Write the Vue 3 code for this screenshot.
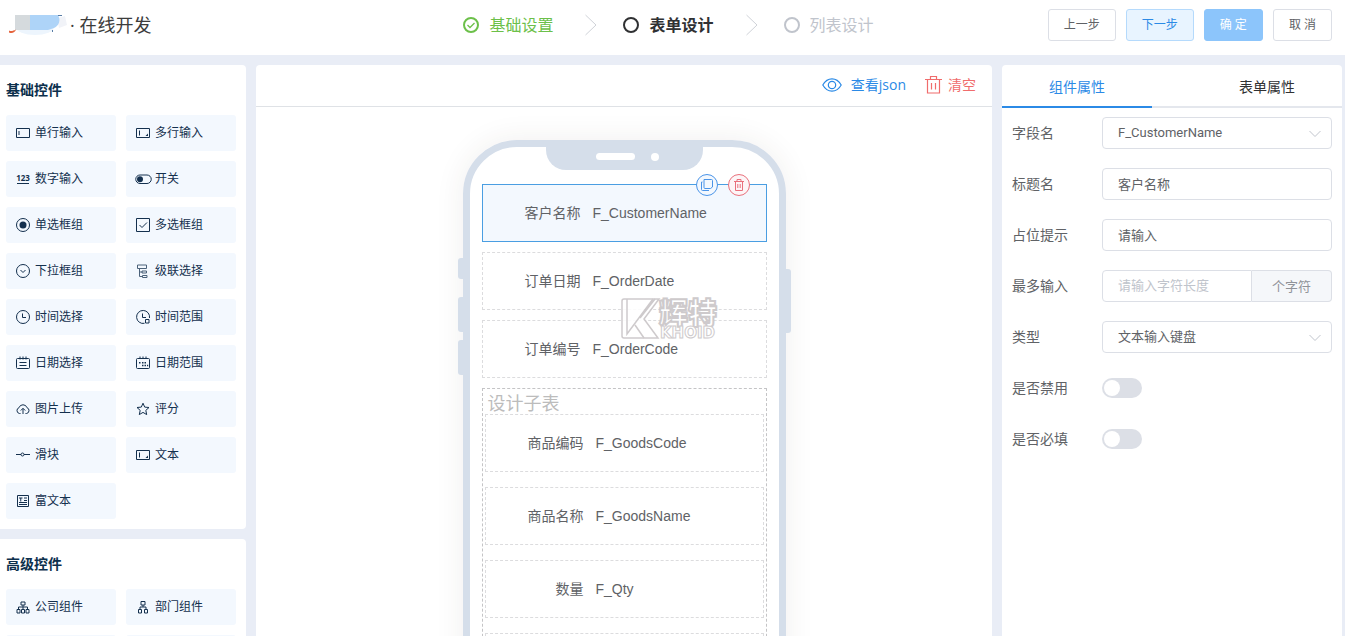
<script setup>
import { ref } from 'vue'

const steps = [
  { label: '基础设置', state: 'done' },
  { label: '表单设计', state: 'current' },
  { label: '列表设计', state: 'todo' },
]

const icons = {
  input: { line: ['M.5 2.500h13v9H.5z', 'M3 5v4'] },
  textarea: { line: ['M.5 2.500h13v9H.5z', 'M3.500 4.500v5'], fill: ['M12 7.500V10H9.500z'] },
  number: { line: ['M1 11.500h12'], text: '123' },
  toggle: { line: ['M4 3h7a4 4 0 0 1 0 8.500H4A4 4 0 0 1 4 3z'], fill: ['M4 4.200a3 3 0 1 1 0 6a3 3 0 0 1 0-6z'] },
  radio: { line: ['M7 .5a6.500 6.500 0 1 1 0 13a6.500 6.500 0 0 1 0-13z'], fill: ['M7 3.500a3.500 3.500 0 1 1 0 7a3.500 3.500 0 0 1 0-7z'] },
  check: { line: ['M.5.5h13v13H.5z', 'M3.500 7l2.500 2.500L11 4.500'] },
  select: { line: ['M7 .5a6.500 6.500 0 1 1 0 13a6.500 6.500 0 0 1 0-13z', 'M4.500 6L7 8.500l2.500-2.500'] },
  cascade: { line: ['M1.500 1h9v3.500h-9z', 'M3.500 4.500v8h3', 'M3.500 8h3', 'M6 7h4.500v2H6z', 'M6.500 11.500h4.500v2H6.500z'], soft: true },
  clock: { line: ['M7 .5a6.500 6.500 0 1 1 0 13a6.500 6.500 0 0 1 0-13z', 'M6.500 3.500v4H10'] },
  clockRange: { line: ['M13.500 8A6.500 6.500 0 1 0 8.500 13.300', 'M6.500 3.500v4H10', 'M9.500 9.500h3.500v3.500H9.500z'] },
  calendar: { line: ['M1.500 2.500h11a1 1 0 0 1 1 1v8a1 1 0 0 1-1 1h-11a1 1 0 0 1-1-1v-8a1 1 0 0 1 1-1z', 'M4 .5v3M7 .5v3M10 .5v3', 'M3.500 6.500h7M3.500 9.500h7'] },
  calendarRange: { line: ['M1.500 2.500h11a1 1 0 0 1 1 1v8a1 1 0 0 1-1 1h-11a1 1 0 0 1-1-1v-8a1 1 0 0 1 1-1z', 'M4 .5v2M7 .5v2M10 .5v2'], fill: ['M3 6h1.500v1.500H3zM6 6h1.500v1.500H6zM8.500 6H10v1.500H8.500zM6 8.800h1.500v1.500H6zM8.500 8.800H10v1.500H8.500zM11 8.800h1.200v1.500H11z'] },
  upload: { line: ['M4.500 11.500H3.500a3 3 0 0 1-.5-5.800a4.200 4.200 0 0 1 8 0a3 3 0 0 1-.5 5.800h-1', 'M7 12V6.500', 'M4.800 8.500L7 6.300l2.200 2.200'] },
  star: { line: ['M7 1.200l1.700 3.900l4.300.4l-3.200 2.900l.9 4.200L7 10.400l-3.700 2.200l.9-4.200L1 5.500l4.300-.4z'] },
  slider: { line: ['M0 6.500h5M8 6.500h6', 'M6.500 5a1.500 1.500 0 1 1 0 3a1.500 1.500 0 0 1 0-3z'] },
  richtext: { line: ['M1.500 1.500h11v11h-11z', 'M3 4h3.500M4.750 4v3.500M8 4h3M8 6.500h3M3 8.500h8M3 10.500h8'] },
  company: { line: ['M5 2h4v3H5z', 'M7 5v2M2.500 9.500V7h9v2.500M7 7v2.500', 'M1 9.500h3V13H1zM5.500 9.500h3V13h-3zM10 9.500h3V13h-3z'] },
  department: { line: ['M5 1.500h4v3.500H5z', 'M7 5v2M4 9.500V7h6v2.500', 'M2.500 9.500h3V13h-3zM8.500 9.500h3V13h-3z'] },
}

const groups = [
  {
    title: '基础控件',
    items: [
      ['input', '单行输入'], ['textarea', '多行输入'],
      ['number', '数字输入'], ['toggle', '开关'],
      ['radio', '单选框组'], ['check', '多选框组'],
      ['select', '下拉框组'], ['cascade', '级联选择'],
      ['clock', '时间选择'], ['clockRange', '时间范围'],
      ['calendar', '日期选择'], ['calendarRange', '日期范围'],
      ['upload', '图片上传'], ['star', '评分'],
      ['slider', '滑块'], ['textarea', '文本'],
      ['richtext', '富文本'],
    ],
    blanks: 0,
  },
  {
    title: '高级控件',
    items: [['company', '公司组件'], ['department', '部门组件']],
    blanks: 2,
  },
]

const fields = [
  { label: '客户名称', name: 'F_CustomerName' },
  { label: '订单日期', name: 'F_OrderDate' },
  { label: '订单编号', name: 'F_OrderCode' },
]
const tableFields = [
  { label: '商品编码', name: 'F_GoodsCode' },
  { label: '商品名称', name: 'F_GoodsName' },
  { label: '数量', name: 'F_Qty' },
  { label: '', name: '' },
]

const selected = ref(0)
const tab = ref(0)
const title = ref('客户名称')
const placeholder = ref('请输入')
const maxLength = ref('')
const disabled = ref(false)
const required = ref(false)
</script>

<template>
  <div class="page">
    <header class="header">
      <div class="brand">
        <svg class="logo" width="62" height="26" viewBox="0 0 62 26" aria-hidden="true">
          <ellipse cx="30" cy="15" rx="19" ry="8" fill="#edf5fd" />
          <path d="M52 6l8-2l2 9l-8 3z" fill="#f1f3f8" />
          <path d="M10 3h15v15H10z" fill="#d5dadd" />
          <path d="M25 3h28c3 5 1 11-4 13l-6 2H25z" fill="#aed4f8" />
          <path d="M4 18.500c2 1 4 .5 7-1c-1 3-4 4.500-7 3z" fill="#e5633c" />
          <path d="M53 3.500h4M47.500 18v2" stroke="#587da6" stroke-width="1" />
        </svg>
        <span>· 在线开发</span>
      </div>
      <ol class="steps">
        <li v-for="(s, i) in steps" :key="s.label" class="step" :class="s.state">
          <svg width="16" height="16" viewBox="0 0 16 16" fill="none" stroke="currentColor" aria-hidden="true">
            <circle cx="8" cy="8" r="7" stroke-width="2" />
            <path v-if="s.state === 'done'" d="M4.500 8l2.500 2.500l4.500-4.500" stroke-width="1.300" />
          </svg>
          <span>{{ s.label }}</span>
          <svg v-if="i < 2" class="arrow" width="12" height="22" viewBox="0 0 12 22" fill="none" stroke="#cfd2d8" aria-hidden="true">
            <path d="M.5 1L11 11L.5 21" />
          </svg>
        </li>
      </ol>
      <div class="actions">
        <button type="button" class="btn">上一步</button>
        <button type="button" class="btn next">下一步</button>
        <button type="button" class="btn ok">确 定</button>
        <button type="button" class="btn">取 消</button>
      </div>
    </header>

    <main class="body">
      <aside class="left">
        <section v-for="g in groups" :key="g.title" class="group">
          <h2>{{ g.title }}</h2>
          <div class="tiles">
            <button v-for="it in g.items" :key="it[1]" type="button" class="tile">
              <svg width="14" height="14" viewBox="0 0 14 14" :class="{ soft: icons[it[0]].soft }" aria-hidden="true">
                <path v-for="d in icons[it[0]].line" :key="d" :d="d" fill="none" stroke="currentColor" />
                <path v-for="d in icons[it[0]].fill" :key="d" :d="d" fill="currentColor" />
                <text v-if="icons[it[0]].text" x="7" y="9" text-anchor="middle" class="digits">{{ icons[it[0]].text }}</text>
              </svg>
              <span>{{ it[1] }}</span>
            </button>
            <div v-for="n in g.blanks" :key="n" class="tile"></div>
          </div>
        </section>
      </aside>

      <section class="center">
        <div class="toolbar">
          <button type="button" class="tool view">
            <svg width="20" height="16" viewBox="0 0 20 16" fill="none" stroke="currentColor" stroke-width="1.200" aria-hidden="true">
              <path d="M.8 8C5.500-.2 14.500-.2 19.200 8C14.500 16.200 5.500 16.200.8 8z" />
              <circle cx="10" cy="8" r="3.700" />
            </svg>
            <span>查看json</span>
          </button>
          <button type="button" class="tool clear">
            <svg width="17" height="18" viewBox="0 0 17 18" fill="none" stroke="currentColor" stroke-width="1.200" aria-hidden="true">
              <path d="M0 3.500h17M5.500 3.500v-3h6v3M2.500 3.500v13.500h12V3.500M6.500 7v6.500M10.500 7v6.500" />
            </svg>
            <span>清空</span>
          </button>
        </div>
        <div class="stage">
          <div class="phone">
            <i class="key k1"></i><i class="key k2"></i><i class="key k3"></i><i class="key k4"></i>
            <div class="notch"><i class="speaker"></i><i class="camera"></i></div>
            <div class="form">
              <div v-for="(f, i) in fields" :key="f.name" class="field" :class="{ selected: selected === i }" @click="selected = i">
                <span class="label">{{ f.label }}</span>
                <span>{{ f.name }}</span>
                <div v-if="selected === i" class="tools">
                  <button type="button" class="round copy" aria-label="复制">
                    <svg width="12" height="12" viewBox="0 0 12 12" fill="none" stroke="currentColor">
                      <path d="M3 .5h7.500a1 1 0 0 1 1 1V8L9.500 9.500H4a1 1 0 0 1-1-1z" />
                      <path d="M1.500 3H.5v7.500a1 1 0 0 0 1 1H8" />
                    </svg>
                  </button>
                  <button type="button" class="round remove" aria-label="删除">
                    <svg width="12" height="12" viewBox="0 0 12 12" fill="none" stroke="currentColor">
                      <path d="M1 2.500h10M4 2.500v-2h4v2M2.500 2.500v9h7v-9M4.800 5v4M7.200 5v4" />
                    </svg>
                  </button>
                </div>
              </div>
              <div class="subtable">
                <div class="subtitle">设计子表</div>
                <div class="rows">
                  <div v-for="f in tableFields" :key="f.name" class="field">
                    <span class="label">{{ f.label }}</span>
                    <span>{{ f.name }}</span>
                  </div>
                </div>
              </div>
            </div>
            <svg class="mark" width="98" height="43" viewBox="0 0 98 43">
              <g fill="#fff" stroke="#c9c5c7" stroke-width="1.500">
                <path d="M3 1h35L23 21l14 19H3a2 2 0 0 1-2-2V3a2 2 0 0 1 2-2z" />
                <path d="M6 1v35L32 1M14 27l9 13M19 20L34 1" fill="none" />
              </g>
              <text x="38" y="26" class="mark-cn">辉特</text>
              <text x="39" y="40" class="mark-en">KHOID</text>
            </svg>
          </div>
        </div>
      </section>

      <aside class="right">
        <div class="tabs" role="tablist">
          <button type="button" role="tab" :aria-selected="tab === 0" :class="{ active: tab === 0 }" @click="tab = 0">组件属性</button>
          <button type="button" role="tab" :aria-selected="tab === 1" :class="{ active: tab === 1 }" @click="tab = 1">表单属性</button>
        </div>
        <form class="props" @submit.prevent>
          <div class="row">
            <label for="p-field">字段名</label>
            <div class="control">
              <select id="p-field"><option>F_CustomerName</option></select>
              <svg class="caret" width="12" height="8" viewBox="0 0 12 8" fill="none" stroke="#c0c4cc" aria-hidden="true"><path d="M.5 1L6 6.500L11.500 1" /></svg>
            </div>
          </div>
          <div class="row">
            <label for="p-title">标题名</label>
            <div class="control"><input id="p-title" v-model="title" type="text" /></div>
          </div>
          <div class="row">
            <label for="p-hint">占位提示</label>
            <div class="control"><input id="p-hint" v-model="placeholder" type="text" /></div>
          </div>
          <div class="row">
            <label for="p-max">最多输入</label>
            <div class="control joined">
              <input id="p-max" v-model="maxLength" type="text" placeholder="请输入字符长度" />
              <span class="append">个字符</span>
            </div>
          </div>
          <div class="row">
            <label for="p-type">类型</label>
            <div class="control">
              <select id="p-type"><option>文本输入键盘</option></select>
              <svg class="caret" width="12" height="8" viewBox="0 0 12 8" fill="none" stroke="#c0c4cc" aria-hidden="true"><path d="M.5 1L6 6.500L11.500 1" /></svg>
            </div>
          </div>
          <div class="row">
            <label for="p-disabled">是否禁用</label>
            <input id="p-disabled" v-model="disabled" type="checkbox" role="switch" class="switch" />
          </div>
          <div class="row">
            <label for="p-required">是否必填</label>
            <input id="p-required" v-model="required" type="checkbox" role="switch" class="switch" />
          </div>
        </form>
      </aside>
    </main>
  </div>
</template>

<style>
html, body { margin: 0; overflow: hidden; }
</style>

<style scoped>
.page, .page * { box-sizing: border-box; }
.page {
  height: 100vh;
  display: flex;
  flex-direction: column;
  overflow: hidden;
  background: #e9edf6;
  color: #606266;
  font: 14px/20px "Open Sans", "Noto Sans CJK SC", sans-serif;
}
button, input, select { font-family: inherit; color: inherit; margin: 0; }
button { cursor: pointer; padding: 0; border: 0; background: none; }
svg { flex: none; display: block; }

.header {
  flex: none;
  height: 55px;
  padding: 0 13px 5px 5px;
  display: grid;
  grid-template-columns: 1fr auto 1fr;
  align-items: center;
  background: #fff;
}
.brand { display: flex; align-items: center; gap: 3px; font-size: 18px; line-height: 24px; color: #3c3c3c; white-space: nowrap; }
.steps { display: flex; gap: 26px; margin: 0; padding: 0; list-style: none; font-size: 16px; line-height: 24px; }
.step { display: flex; align-items: center; gap: 10px; white-space: nowrap; }
.arrow { margin-left: 22px; }
.done { color: #6cc04a; }
.current { color: #303133; font-weight: 700; }
.todo { color: #c0c4cc; }
.actions { display: flex; justify-content: flex-end; gap: 10px; }
.btn { height: 32px; padding: 0 15px; border: 1px solid #dcdfe6; border-radius: 3px; background: #fff; font-size: 12px; line-height: 20px; white-space: nowrap; }
.next { background: #e8f4ff; border-color: #b5dafc; color: #2b8ae6; }
.ok { background: #8cc5fb; border-color: #8cc5fb; color: #fff; }

.body { flex: 1; min-height: 0; display: flex; gap: 10px; padding: 10px 3px 0 0; }
.left { flex: none; width: 246px; display: flex; flex-direction: column; gap: 10px; overflow: hidden; }
.group { flex: none; padding: 15px 10px 10px 6px; background: #fff; border-radius: 0 4px 4px 0; }
.group h2 { margin: 0 0 15px; font-size: 14px; line-height: 20px; color: #0c2f4c; }
.tiles { display: grid; grid-template-columns: 1fr 1fr; gap: 10px; }
.tile { height: 36px; padding: 0 10px; display: flex; align-items: center; gap: 5px; border-radius: 3px; background: #f3f8fe; color: #14304e; font-size: 12px; line-height: 20px; }
.tile svg { overflow: visible; }
.tile .soft { opacity: 0.75; }
.digits { font: 700 8px "Open Sans", sans-serif; fill: currentColor; }

.center { flex: 1; min-width: 0; display: flex; flex-direction: column; overflow: hidden; background: #fff; border-radius: 4px 4px 0 0; }
.toolbar { flex: none; height: 42px; padding: 0 16px 2px; display: flex; align-items: center; justify-content: flex-end; gap: 19px; border-bottom: 1px solid #dfe2e6; }
.tool { display: flex; align-items: center; font-size: 14px; line-height: 20px; }
.view { gap: 9px; color: #2b8ae6; }
.clear { gap: 6px; color: #f06c6c; }
.stage { flex: 1; min-height: 0; padding-top: 33px; display: flex; justify-content: center; }
.phone { position: relative; flex: none; width: 323px; height: 640px; border: 7px solid #d5deea; border-radius: 54px; box-shadow: 0 0 30px rgba(60, 50, 40, 0.08); }
.notch { width: 157px; height: 23px; margin: 0 auto; display: flex; align-items: center; justify-content: flex-end; gap: 16px; padding: 0 44px 4px 0; background: #d5deea; border-radius: 0 0 20px 20px; }
.speaker { width: 39px; height: 7px; border-radius: 4px; background: #fff; }
.camera { width: 8px; height: 8px; border-radius: 50%; background: #fff; }
.key { position: absolute; width: 5px; background: #d5deea; }
.k1, .k2, .k3 { left: -12px; border-radius: 3px 0 0 3px; }
.k1 { top: 111px; height: 21px; }
.k2 { top: 150px; height: 35px; }
.k3 { top: 193px; height: 35px; }
.k4 { right: -12px; top: 122px; height: 64px; border-radius: 0 3px 3px 0; }
.form { margin: 14px 12px 0; display: flex; flex-direction: column; gap: 10px; font-family: "Liberation Sans", "Noto Sans CJK SC", sans-serif; }
.field { position: relative; height: 58px; display: flex; align-items: center; gap: 12px; border: 1px dashed #dcdcde; }
.field.selected { border: 1px solid #4a9ee2; background: #f3f8fe; }
.label { width: 98px; text-align: right; }
.tools { position: absolute; top: -11px; right: 16px; display: flex; gap: 10px; }
.round { width: 22px; height: 22px; display: flex; align-items: center; justify-content: center; border: 1px solid; border-radius: 50%; background: #fff; }
.copy { color: #4a94e8; background: #f3f8fe; }
.remove { color: #e9707c; background: #fdf5f7; }
.subtable { padding: 0 2px 10px; border: 1px dashed #c4c4c6; }
.subtitle { padding: 5px 3px 0; font-size: 18px; line-height: 20px; color: #bcbcbc; }
.rows { display: flex; flex-direction: column; gap: 15px; }
.mark { position: absolute; left: 151px; top: 151px; overflow: visible; opacity: 0.9; }
.mark-cn { font: 900 29px "Noto Sans CJK SC", sans-serif; fill: #fff; stroke: #c9c5c7; stroke-width: 2px; }
.mark-en { font: 700 15px "DejaVu Sans", sans-serif; fill: #fff; stroke: #c9c5c7; stroke-width: 1px; }

.right { flex: none; width: 340px; background: #fff; border-radius: 4px 4px 0 0; }
.tabs { height: 43px; display: flex; justify-content: space-between; border-bottom: 2px solid #e4e7ed; }
.tabs button { width: 150px; height: 43px; padding-top: 3px; border-bottom: 2px solid transparent; font-size: 14px; line-height: 20px; color: #303133; }
.tabs .active { color: #2b8ae6; border-color: #2b8ae6; }
.props { padding: 9px 10px; display: flex; flex-direction: column; gap: 19px; }
.row { height: 32px; display: flex; align-items: center; }
.row label { flex: none; width: 90px; }
.control { position: relative; flex: 1; min-width: 0; display: flex; }
.control input, .control select { flex: 1; min-width: 0; height: 32px; padding: 0 15px 1px; border: 1px solid #dcdfe6; border-radius: 4px; background: #fff; font-family: Roboto, "Noto Sans CJK SC", sans-serif; font-size: 13px; appearance: none; outline: none; }
.control input::placeholder { color: #c0c4cc; }
.caret { position: absolute; right: 11px; top: 13px; pointer-events: none; }
.control.joined input { border-radius: 4px 0 0 4px; }
.append { width: 80px; border: 1px solid #dcdfe6; border-left: 0; border-radius: 0 4px 4px 0; background: #f5f7fa; color: #909399; font-size: 13px; line-height: 30px; text-align: center; }
.switch { appearance: none; width: 40px; height: 20px; padding: 2px; border-radius: 10px; background: #dcdfe6; cursor: pointer; }
.switch::before { content: ""; display: block; width: 16px; height: 16px; border-radius: 50%; background: #fff; }
.switch:checked { background: #2b8ae6; }
.switch:checked::before { margin-left: 20px; }
</style>
